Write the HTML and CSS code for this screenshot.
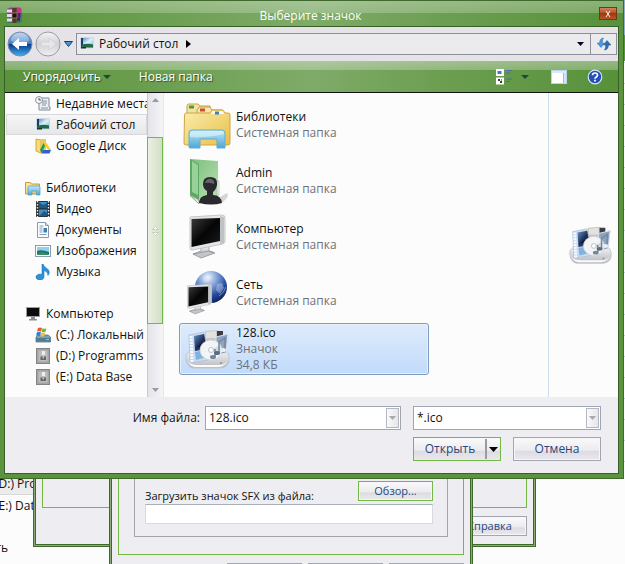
FILE: index.html
```html
<!DOCTYPE html>
<html lang="ru">
<head>
  <meta charset="utf-8">
  <title>Выберите значок</title>
  <link rel="stylesheet" href="styles.css">
</head>
<body>
  <!-- Shared gradients and symbols -->
  <svg class="defs" width="0" height="0" aria-hidden="true">
    <defs>
      <linearGradient id="gFolder" x1="0" y1="0" x2="1" y2="1"><stop offset="0" stop-color="#fbeeb0"/><stop offset="1" stop-color="#e8bf45"/></linearGradient>
      <linearGradient id="gBlue" x1="0" y1="0" x2="0" y2="1"><stop offset="0" stop-color="#c2e8f6"/><stop offset="1" stop-color="#4ba6d8"/></linearGradient>
      <linearGradient id="gGreen" x1="0" y1="0" x2="1" y2="1"><stop offset="0" stop-color="#7dbd7d"/><stop offset="1" stop-color="#b5e2b0"/></linearGradient>
      <linearGradient id="gScreen" x1="0" y1="0" x2="1" y2="1"><stop offset="0" stop-color="#3a3a3a"/><stop offset=".5" stop-color="#050505"/><stop offset="1" stop-color="#1c1c1c"/></linearGradient>
      <linearGradient id="gSilver" x1="0" y1="0" x2="0" y2="1"><stop offset="0" stop-color="#f7f7f8"/><stop offset="1" stop-color="#b5b8bc"/></linearGradient>
      <linearGradient id="gFilm" x1="0" y1="0" x2="1" y2="1"><stop offset="0" stop-color="#6d93cf"/><stop offset=".5" stop-color="#1d2f55"/><stop offset="1" stop-color="#3d68a5"/></linearGradient>
      <radialGradient id="gGlobe" cx=".4" cy=".2" r=".85"><stop offset="0" stop-color="#eef4fc"/><stop offset=".35" stop-color="#7fa0d6"/><stop offset=".7" stop-color="#24489a"/><stop offset="1" stop-color="#0b1c50"/></radialGradient>
      <linearGradient id="gBack" x1="0" y1="0" x2="0" y2="1"><stop offset="0" stop-color="#a9c8ea"/><stop offset=".48" stop-color="#3f7cc4"/><stop offset=".52" stop-color="#0e3c90"/><stop offset="1" stop-color="#3fb0f0"/></linearGradient>
      <linearGradient id="gFwd" x1="0" y1="0" x2="0" y2="1"><stop offset="0" stop-color="#f4f4f5"/><stop offset=".5" stop-color="#d3d3d7"/><stop offset="1" stop-color="#f0f0f2"/></linearGradient>
      <linearGradient id="gSky" x1="0" y1="0" x2="1" y2="1"><stop offset="0" stop-color="#3f7fc8"/><stop offset=".5" stop-color="#dff2f8"/><stop offset="1" stop-color="#6fb0c0"/></linearGradient>
    </defs>
    <symbol id="desktop" viewBox="0 0 16 16">
      <rect x="1" y="1" width="14" height="11.500" rx="1" fill="#cfdae0"/>
      <rect x="2" y="2" width="12" height="9.500" fill="url(#gSky)"/>
      <path d="M2 2h2v9.500H2z" fill="#173d6c"/><path d="M2 9q6-2 12-.5v3H2z" fill="#22684a"/>
      <path d="M2 11h5v1.500H2z" fill="#123a30"/>
    </symbol>
    <symbol id="media" viewBox="0 0 48 44">
      <path d="M3 32Q2 26 8 24L40 23q7 2 6 11-1 6-8 7H10q-6-1-7-9z" fill="url(#gSilver)" stroke="#c3c6ca"/>
      <path d="M5 34q3 4 9 4h22q6 0 8-4-1 5-8 6H12q-6-1-7-6z" fill="#fafafa"/>
      <path d="M22 4l12-1 6 4v10H22z" fill="#c9c8c4"/><path d="M34 4h6v6h-6z" fill="#3a3d41"/><path d="M23 5l10-1v7H23z" fill="#e3e2de"/>
      <path d="M6 8l15-3 4 28-18 3z" fill="#c9dbf0" stroke="#a9bdd8" stroke-width=".7"/>
      <path d="M11 9l10-2 3 15-12 2z" fill="url(#gFilm)"/><path d="M14 20l8-7 2 9z" fill="#0f1a33"/><path d="M12 25l11-2 1 7-11 3z" fill="#7fb2de"/>
      <path d="M8 9l1 26" stroke="#f6faff" stroke-width="3" stroke-dasharray="2 1"/>
      <path d="M33 10l12-3-2 19-10 2z" fill="#8ea3c0" stroke="#d9e4f0"/>
      <ellipse cx="28" cy="23" rx="11" ry="10" fill="#f3f4f5" stroke="#cdd0d5" stroke-width=".7"/>
      <path d="M28 23l9-5q2 4 0 9z" fill="#d3dae2"/><circle cx="28" cy="23" r="2.500" fill="#fff" stroke="#a3aab3" stroke-width=".7"/>
      <path d="M42 23V10M36 26V15l6-4M32 30v-8" fill="none" stroke="#7688a0" stroke-width="1.500"/>
      <ellipse cx="34" cy="26" rx="3" ry="2" fill="#5b6c84"/><ellipse cx="40" cy="23" rx="3" ry="2" fill="#e8edf2"/><ellipse cx="30" cy="30" rx="3" ry="2" fill="#75859a"/>
      <circle cx="38" cy="36" r="1" fill="#8a9098"/>
    </symbol>
    <symbol id="drive" viewBox="0 0 16 16">
      <rect x="1.500" y=".5" width="13" height="15" fill="#a9a9a9" stroke="#858585"/>
      <rect x="3" y="2" width="10" height="12" fill="#bdbdbd" stroke="#999" stroke-width=".7"/>
      <path d="M7 3h3v4H7z" fill="#eee"/><path d="M5.500 8.500h2v2h1.500v-2h2V12H5.500z" fill="#666"/>
    </symbol>
    <symbol id="monitor" viewBox="0 0 48 48">
      <path d="M18 34l8-2v6l4 1-10 4-10-2 8-3z" fill="url(#gSilver)" stroke="#8b8e92" stroke-width=".7"/>
      <path d="M10 41l15-3 7 2-14 5z" fill="#c3c5c8" stroke="#85878b" stroke-width=".7"/>
      <path d="M7 4l32-2q3 0 3 3v23q0 2-2 3L9 37q-2 0-2-2z" fill="#e5e6e8" stroke="#c4c6c9"/>
      <path d="M37 3l4 1v26l-4 1z" fill="#bfc2c5"/>
      <path d="M8.500 6L37 5v23L8.500 34z" fill="url(#gScreen)"/>
    </symbol>
  </svg>

  <!-- Explorer window at the back -->
  <div class="explorer">
    <ul class="explorer-tree">
      <li class="current">(D:) Programms</li>
      <li>(E:) Data Base</li>
      <li class="network">Сеть</li>
    </ul>
    <div class="explorer-edge"></div>
  </div>

  <!-- Archive dialog -->
  <div class="window archive-window">
    <div class="panel"></div>
    <div class="button-row"><button class="btn">Справка</button></div>
  </div>

  <!-- SFX options dialog -->
  <div class="window sfx-window">
    <div class="panel">
      <div class="group">
        <div class="group-row">
          <label for="sfxIcon">Загрузить значок SFX из файла:</label>
          <button class="btn btn-green">Обзор...</button>
        </div>
        <input type="text" id="sfxIcon">
      </div>
    </div>
    <div class="button-row">
      <button class="btn" aria-label="OK"></button>
      <button class="btn" aria-label="Отмена"></button>
      <button class="btn" aria-label="Справка"></button>
    </div>
  </div>

  <!-- Open file dialog -->
  <div class="dialog">
    <header class="titlebar">
      <svg class="app-icon" viewBox="0 0 16 16" width="16" height="16">
        <path d="M1 2l3-1.500h10L15.500 2v4H1z" fill="#8a3f9e"/><path d="M1 6h14.500v4.500H1z" fill="#3a4f9c"/><path d="M1 10.500h14.500v4L14 16H2l-1-1z" fill="#2f7f5a"/>
        <path d="M1 2.500h5v3H1zM1 7h5v3H1zM1 11.500h5v3H1z" fill="#ead9ee"/>
        <path d="M11 2h3v12h-3z" fill="#5b1f5e"/><path d="M11 1h4v5h-4z" fill="#c23a78"/>
        <path d="M6.500 1h4v15h-4z" fill="#5b3526"/><path d="M6 6h5v5H6z" fill="#1b1210" stroke="#b99a64" stroke-width=".7"/>
      </svg>
      <h1>Выберите значок</h1>
      <button class="close" aria-label="Закрыть"><svg viewBox="0 0 8 8" width="8" height="8"><path d="M2 1l4 6M6 1L2 7" stroke="#fff"/></svg></button>
    </header>

    <div class="dialog-body">
      <!-- Address bar -->
      <div class="address-row">
        <button class="nav-btn" aria-label="Назад">
          <svg viewBox="0 0 26 26" width="26" height="26"><circle cx="13" cy="13" r="12" fill="url(#gBack)" stroke="#7d8ba5"/><path d="M4 10a9 8 0 0 1 18 0q-9 4-18 0z" fill="#fff" opacity=".3"/><path d="M5 13l7-6v4h8v4h-8v4z" fill="#fff"/></svg>
        </button>
        <button class="nav-btn" aria-label="Вперёд">
          <svg viewBox="0 0 26 26" width="26" height="26"><circle cx="13" cy="13" r="12" fill="url(#gFwd)" stroke="#9a9aa2"/><path d="M21 13l-7-6v4H6v4h8v4z" fill="#e6e6e9" stroke="#d0d0d4" stroke-width=".7"/></svg>
        </button>
        <button class="history" aria-label="Последние страницы"><svg viewBox="0 0 9 6" width="9" height="6"><path d="M.5.500h8L4.500 5.500z" fill="#4a97d4" stroke="#1c3e66"/></svg></button>
        <div class="address">
          <svg width="16" height="16"><use href="#desktop"/></svg>
          <a href="#">Рабочий стол</a>
          <svg class="crumb-arrow" viewBox="0 0 5 8" width="5" height="8"><path d="M0 0l5 4-5 4z"/></svg>
          <button class="address-drop" aria-label="Предыдущие расположения"><svg viewBox="0 0 7 4" width="7" height="4"><path d="M0 0h7L3.500 4z" fill="#050528"/></svg></button>
        </div>
        <button class="refresh" aria-label="Обновить">
          <svg viewBox="0 0 14 14" width="14" height="14"><path d="M6.500 1Q3 1 2.500 6H0l4 4.500L7.500 6H5.300Q5 3 6.500 1z" fill="#4d9bdc" stroke="#2b6cab" stroke-width=".5"/><path d="M7.500 13q3.500 0 4-5H14l-4-4.500L6.500 8h2.200q.3 3-1.200 5z" fill="#2e6fb8" stroke="#1d4f8c" stroke-width=".5"/></svg>
        </button>
      </div>

      <!-- Toolbar -->
      <div class="toolbar">
        <button class="tool">Упорядочить <svg viewBox="0 0 8 4" width="8" height="4"><path d="M0 0h8L4 4z" fill="#1d4a38"/></svg></button>
        <button class="tool new-folder">Новая папка</button>
        <button class="tool icon-tool view" aria-label="Изменить представление">
          <svg viewBox="0 0 16 16" width="16" height="16"><path d="M0 0h8v7H0zM0 8.500h8v7H0z" fill="#fff"/><path d="M1.500 2h4v3h-4z" fill="#3b7dbd"/><path d="M2 10h2v2H2zM4 12h2v2H4z" fill="#3a3d20"/><path d="M5 10h1v2H5z" fill="#c79"/><path d="M10 1.500h6M10 4h4M10 10h6M10 12.500h4" stroke="#4d6f9c"/></svg>
          <svg viewBox="0 0 8 4" width="8" height="4"><path d="M0 0h8L4 4z" fill="#1d4a38"/></svg>
        </button>
        <button class="tool icon-tool pane" aria-label="Область просмотра">
          <svg viewBox="0 0 16 14" width="16" height="14"><rect x=".5" y=".5" width="15" height="13" fill="#fff" stroke="#b9d4ec"/><path d="M1 1h14v2H1z" fill="#dbe9f6"/><path d="M12.500 3v10" stroke="#9dbbe0"/><path d="M13 3h2v10h-2z" fill="#d4e4f6"/></svg>
        </button>
        <button class="tool icon-tool" aria-label="Справка">
          <svg viewBox="0 0 16 16" width="16" height="16"><circle cx="8" cy="8" r="6.800" fill="#2450b8" stroke="#d8e2f6" stroke-width="1.200"/><path d="M5.500 6.300Q5.600 4 8 4t2.500 2.200C10.500 8 8 8 8 9.700" fill="none" stroke="#fff" stroke-width="1.700"/><path d="M7.100 10.800h1.800v1.700H7.100z" fill="#fff"/></svg>
        </button>
      </div>

      <div class="content">
        <!-- Navigation tree -->
        <nav class="tree">
          <a class="child" href="#"><svg viewBox="0 0 16 16" width="16" height="16"><path d="M5 2h9v9h1v3H4V3z" fill="#eceff2" stroke="#7f8a95"/><path d="M7 5h5M7 7h5M7 9h4M6 12h7" stroke="#7f93a8"/><circle cx="4" cy="4" r="3.500" fill="#f5f6f8" stroke="#8b949e"/><path d="M4 2v2h2" fill="none" stroke="#555"/></svg>Недавние места</a>
          <a class="child selected" href="#"><svg width="16" height="16"><use href="#desktop"/></svg>Рабочий стол</a>
          <a class="child" href="#"><svg viewBox="0 0 16 16" width="16" height="16"><path d="M1 1l5 1v13l-5-2z" fill="#f4dc7a" stroke="#d1a93c"/><path d="M5 1h6v13H6z" fill="#ecc85a"/><path d="M8.500 5h3L16 12h-3z" fill="#f7cf1e"/><path d="M8.500 5L10 8l-3.500 7L5 12z" fill="#1f9d55"/><path d="M8 12h8l-1.500 3.500H6.300z" fill="#2d62d0"/></svg>Google Диск</a>

          <a class="root" href="#"><svg viewBox="0 0 16 16" width="16" height="16"><path d="M.5 2.500h5l1 1.500h8v10H.5z" fill="url(#gFolder)" stroke="#c59c3f"/><path d="M3 7.500q0-1.500 1.500-1.500h9q1.500 0 1.500 1.500V15h-3.500v-4H7v4H3z" fill="url(#gBlue)" stroke="#4b9cc6" stroke-width=".7"/></svg>Библиотеки</a>
          <a class="child" href="#"><svg viewBox="0 0 16 16" width="16" height="16"><path d="M1 0h14v16H1z" fill="#2d3337"/><path d="M4 1h8v6H4zM4 8.500h8V15H4z" fill="#3e8fcb"/><path d="M4 1l4 3 4-2v5H4zM4 15l5-5 3 2v3z" fill="#205982"/><path d="M2.500 0v16M13.500 0v16" stroke="#e6ecef" stroke-width="1.400" stroke-dasharray="1.500 1.500"/></svg>Видео</a>
          <a class="child" href="#"><svg viewBox="0 0 16 16" width="16" height="16"><path d="M2.500.5h8l3 3v12h-11z" fill="#fafcfd" stroke="#8a9aa7"/><path d="M10.500.5v3h3" fill="#d4dfe8" stroke="#8a9aa7"/><path d="M4.500 4h4M4.500 6h3M4.500 8h3M4.500 10h3M4.500 12.500h7" stroke="#7fa0bd"/><path d="M8.500 6h3.500v4.500H8.500z" fill="#3c7fae"/></svg>Документы</a>
          <a class="child" href="#"><svg viewBox="0 0 16 16" width="16" height="16"><rect x=".5" y="2.500" width="15" height="11" fill="#fff" stroke="#8b9daa"/><path d="M2 4h12v8H2z" fill="#8fd0f0"/><path d="M2 8q4-2 12 1v3H2z" fill="#1c6d8f"/><path d="M2 10l5-1 7 2v1H2z" fill="#358e59"/></svg>Изображения</a>
          <a class="child" href="#"><svg viewBox="0 0 16 16" width="16" height="16"><path d="M8 0q1 3 4 4.500 4 3 1 7 0-4-4-5V13a4 3 0 1 1-2-2.500V0z" fill="#2a93dc" stroke="#1769ab" stroke-width=".5"/></svg>Музыка</a>

          <a class="root" href="#"><svg viewBox="0 0 16 16" width="16" height="16"><path d="M1 1h14v10H1z" fill="#9a9ca0"/><path d="M2 2h12v8H2z" fill="#0b0b0b"/><path d="M6 11h4v2h2v1.500H4V13h2z" fill="#8a8c90"/></svg>Компьютер</a>
          <a class="child" href="#"><svg viewBox="0 0 16 16" width="16" height="16"><path d="M1 10l2-2h10l2.500 2v5H1z" fill="#7e9fb0" stroke="#4b6572" stroke-width=".7"/><path d="M1 11h14v3.500H1z" fill="#4f7d94"/><path d="M11 12h3v1h-3z" fill="#6ee84f"/><path d="M3 1q2-1 4 0L6 4.500q-2-1-4 0z" fill="#e8592b"/><path d="M7.500 1.200q2 1 4 0l-1 3.600q-2 1-4 0z" fill="#74b62e"/><path d="M2 5.200q2-1 4 0L5 8.800q-2-1-4 0z" fill="#2f7fd4"/><path d="M6.300 5.500q2 1 4 0l-1 3.500q-2 1-4 0z" fill="#f6c22c"/></svg>(C:) Локальный диск</a>
          <a class="child" href="#"><svg width="16" height="16"><use href="#drive"/></svg>(D:) Programms</a>
          <a class="child" href="#"><svg width="16" height="16"><use href="#drive"/></svg>(E:) Data Base</a>
        </nav>

        <div class="scrollbar">
          <svg viewBox="0 0 7 4" width="7" height="4"><path d="M0 4h7L3.500 0z" fill="#9b9ba1"/></svg>
          <div class="scroll-track">
            <div class="scroll-thumb">
              <svg viewBox="0 0 7 10" width="7" height="10"><path d="M.5 3.500l3-3 3 3zM.5 6.500l3 3 3-3z" fill="#fff" stroke="#b9c6ae" stroke-width=".8"/></svg>
            </div>
          </div>
          <svg viewBox="0 0 7 4" width="7" height="4"><path d="M0 0h7L3.500 4z" fill="#9b9ba1"/></svg>
        </div>

        <!-- File list -->
        <ul class="files">
          <li>
            <svg viewBox="0 0 48 48" width="48" height="48"><path d="M4 5q0-2 2-2h9l2 2h10v8H4z" fill="#f3e3a0" stroke="#c9a14a"/><path d="M6 4.500h5v3H6z" fill="#4a9a48"/><path d="M14 9l2-3h11l2 3h10v8H14z" fill="#f6e7ac" stroke="#c9a14a"/><path d="M17 7.500h5v3h-5z" fill="#c9502e"/><path d="M1.500 14q0-2 2-2H27l2-3h11l2 3h3q2 0 2 2v28q0 2-2 2H3q-2 0-2-2z" fill="url(#gFolder)" stroke="#cfa544"/><path d="M29 10h11l1 3H28z" fill="#f7fafc"/><path d="M32 10.500h4v3h-4z" fill="#3d7fc0"/><path d="M6 32q0-3 3-3h30q3 0 3 3v15h-8v-8q0-1-1-1H18q-1 0-1 1v8H7q-1 0-1-1z" fill="url(#gBlue)" stroke="#5eaed4"/><path d="M7 32q1-2 3-2h29q2 0 2 3-18 4-34 3z" fill="#e0f5fb" opacity=".6"/></svg>
            <p>Библиотеки<span>Системная папка</span></p>
          </li>
          <li>
            <svg viewBox="0 0 48 48" width="48" height="48"><path d="M30 44l14-8q3 3-4 9z" fill="#d5d5d5"/><path d="M7 2l28 2v35l-19 3L7 38z" fill="url(#gGreen)"/><path d="M34 24h2v14h-2z" fill="#eef5ee" stroke="#9cb69c" stroke-width=".6"/><path d="M7 2l9 5v40L7 39z" fill="#5fa765"/><path d="M9 4l6 4v30L9 35z" fill="#98d29a"/><path d="M7 38l9 5v4z" fill="#dfe8df" stroke="#8fa08f" stroke-width=".7"/><path d="M20 27q0-7 7-7 8 0 7 8-1 5-4 7v3q8 0 9 8-10 3-23 0 0-7 8-8v-4q-4-2-4-7z" fill="#2b2930"/><path d="M22 26q2-5 6-4 4 1 3 5-5-2-9-1z" fill="#66636b"/></svg>
            <p>Admin<span>Системная папка</span></p>
          </li>
          <li>
            <svg width="48" height="48"><use href="#monitor"/></svg>
            <p>Компьютер<span>Системная папка</span></p>
          </li>
          <li>
            <svg viewBox="0 0 48 48" width="48" height="48"><circle cx="28" cy="18" r="16" fill="url(#gGlobe)"/><path d="M20 8q6-4 9 0l-4 5q-6 1-5-5zM34 15l5-1 2 5-4 6-4-4z" fill="#e4ecf8" opacity=".35"/><path d="M36 27q5-3 7-9" fill="none" stroke="#a8c2ee" opacity=".6"/><svg x="0" y="14" width="33" height="33" viewBox="3 0 43 48"><use href="#monitor" width="48" height="48"/></svg></svg>
            <p>Сеть<span>Системная папка</span></p>
          </li>
          <li class="selected">
            <svg width="48" height="44"><use href="#media"/></svg>
            <p>128.ico<span>Значок</span><span>34,8 КБ</span></p>
          </li>
        </ul>

        <div class="preview">
          <svg width="46" height="44"><use href="#media"/></svg>
        </div>
      </div>

      <!-- File name, type and buttons -->
      <footer class="footer">
        <label for="fileName">Имя файла:</label>
        <div class="combo">
          <input type="text" id="fileName" value="128.ico">
          <button class="combo-arrow" aria-label="Показать список"><svg viewBox="0 0 7 4" width="7" height="4"><path d="M0 0h7L3.500 4z" fill="#a9a9ae"/></svg></button>
        </div>
        <div class="actions">
          <div class="combo">
            <select aria-label="Тип файлов"><option>*.ico</option></select>
            <span class="combo-arrow"><svg viewBox="0 0 7 4" width="7" height="4"><path d="M0 0h7L3.500 4z" fill="#a9a9ae"/></svg></span>
          </div>
          <div class="action-buttons">
            <div class="split btn-green">
              <button class="open">Открыть</button>
              <button class="open-more" aria-label="Другие варианты"><svg viewBox="0 0 9 5" width="9" height="5"><path d="M0 0h9L4.500 5z"/></svg></button>
            </div>
            <button class="btn">Отмена</button>
          </div>
        </div>
      </footer>
    </div>
  </div>
</body>
</html>
```
FILE: styles.css
```css
* { box-sizing: border-box; }
body {
  position: relative;
  margin: 0;
  min-height: 100vh;
  overflow: hidden;
  background: #fcfcfc;
  color: #111;
  font: 12px/16px "Open Sans", sans-serif;
}
ul { list-style: none; margin: 0; padding: 0; }
button, input, select { font: inherit; color: inherit; margin: 0; padding: 0; border: 0; background: none; border-radius: 0; }
button, select { cursor: pointer; }
a { color: inherit; text-decoration: none; }
svg { display: block; flex: none; }
.defs { position: absolute; }

/* Explorer window */
.explorer { position: absolute; inset: 0; overflow: hidden; }
.explorer-tree { width: 40px; padding-top: 473px; line-height: 21px; white-space: nowrap; }
.explorer-tree li { text-indent: -5px; }
.explorer-tree .current { background: #ececec; border-bottom: 1px solid #d8d8d8; }
.explorer-tree .network { margin-top: 21px; text-indent: -19px; }
.explorer-edge {
  position: absolute;
  top: 0;
  right: 0;
  width: 1px;
  height: 479px;
  background: linear-gradient(#8fb0d0 35px, #5b933f 35px, #5b933f 61px, transparent 61px), repeating-linear-gradient(#fcfcfc 0 20px, #b8d0e0 20px 21px);
}

/* Windows behind the dialog */
.window {
  position: absolute;
  top: 442px;
  padding: 8px;
  background: #eeeef2;
  border: 1px solid #3f6a2b;
  box-shadow: inset 0 0 0 1px #8aab79, inset 0 0 0 2px #3f6a2b;
  font-size: 11px;
  line-height: 14px;
}
.archive-window { left: 33px; width: 503px; padding-bottom: 10px; }
.archive-window .panel { height: 57px; }
.sfx-window { left: 109px; width: 364px; }
.panel { border: 1px solid #74b944; }
.sfx-window .panel { padding: 16px 15px 17px; }
.group { padding: 12px 14px 12px 10px; border: 1px solid #a3a3ab; }
.group-row { display: flex; justify-content: space-between; margin-bottom: 3px; }
.group-row label { padding-top: 8px; height: 20px; }
.group input { display: block; width: 100%; height: 20px; background: #fff; border: 1px solid #d9d9df; border-top-color: #a9b0b8; }
.button-row { display: flex; gap: 6px; justify-content: flex-end; margin-top: 8px; }

.btn {
  width: 75px;
  height: 20px;
  border: 1px solid #a3a6b0;
  background: linear-gradient(#fafafb, #ececf0 55%, #dcdce2 60%, #e8e8ed);
  box-shadow: inset 0 0 0 1px #f6f6f8;
  color: #27467d;
}
.btn-green { border: 1px solid #74b944; }

/* Open dialog frame */
.dialog {
  position: relative;
  width: calc(100% - 1px);
  padding: 0 4px 4px;
  border: 1px solid #40692e;
  border-left: 0;
  background: #5b933f;
}
.titlebar {
  display: flex;
  align-items: center;
  height: 25px;
  margin: 0 -4px;
  padding: 0 6px;
  background:
    linear-gradient(rgba(255,255,255,.3), rgba(255,255,255,.22) 50%, transparent 50%),
    linear-gradient(90deg, #5a933c, #6c9f51 25%, #7fab68 50%, #6d9f53 70%, #57913a);
}
.titlebar h1 { flex: 1; margin: 5px 0 0; text-align: center; font-size: 12px; font-weight: normal; color: #fff; }
.app-icon { margin-top: 3px; }
.close {
  display: flex;
  align-items: center;
  justify-content: center;
  width: 18px;
  height: 13px;
  border: 1px solid #6f3a1c;
  background: linear-gradient(#cf8560, #b04a20 50%, #9c3a10 50%, #bb5524);
}
.dialog-body { border: 1px solid #3a602a; background: #eeeef2; }

/* Address bar */
.address-row { display: flex; align-items: center; height: 34px; padding: 0 1px 0 2px; background: #e5e2e8; }
.nav-btn { margin-right: 2px; }
.history { padding: 0 3px 0 1px; }
.address {
  display: flex;
  flex: 1;
  align-items: center;
  height: 22px;
  padding: 0 6px 0 2px;
  border: 1px solid #8d8f9b;
  background: #ebebed;
}
.address a { margin: 0 8px 0 4px; }
.address-drop { margin-left: auto; }
.refresh { display: flex; align-items: center; justify-content: center; width: 26px; height: 22px; border: 1px solid #8d8f9b; border-left: 0; background: #ebebed; }

/* Toolbar */
.toolbar {
  display: flex;
  align-items: center;
  height: 32px;
  padding: 0 15px 0 18px;
  border-bottom: 1px solid #111;
  background:
    linear-gradient(rgba(255,255,255,.36), rgba(255,255,255,.26) 9px, transparent 9px),
    linear-gradient(90deg, #5a933c, #6c9f51 25%, #7fab68 50%, #6d9f53 70%, #57913a);
}
.tool { display: flex; align-items: center; gap: 2px; color: #fff; text-shadow: 1px 1px 1px #2f5220; }
.new-folder { margin-left: 28px; }
.view { gap: 9px; margin-left: auto; }
.pane { margin: 0 20px 0 22px; }

/* Tree, files, preview */
.content { display: flex; height: 304px; background: #fcfcfc; }
.tree { width: 142px; overflow: hidden; white-space: nowrap; padding-left: 1px; }
.tree a { display: flex; align-items: center; gap: 5px; height: 21px; padding-left: 29px; }
.tree .root { margin-top: 21px; padding-left: 19px; }
.tree .selected { background: linear-gradient(#f7f7f8, #e6e6e8); box-shadow: inset 0 0 0 1px #d9d9dc; }
.scrollbar {
  display: flex;
  flex-direction: column;
  align-items: center;
  width: 16px;
  padding: 5px 0;
  border-left: 1px solid #c9c9d2;
  background: linear-gradient(90deg, #e3e3e9, #f5f5f8);
}
.scroll-track { flex: 1; width: 100%; padding-top: 35px; }
.scroll-thumb {
  display: flex;
  align-items: center;
  justify-content: center;
  height: 187px;
  margin-left: -1px;
  border: 1px solid #74b944;
  background: linear-gradient(90deg, #e9f0e2, #d2dfc6);
}
.files { flex: 1; display: flex; flex-direction: column; gap: 4px; padding: 6px 0 0 15px; border-left: 1px solid #dfe8f4; }
.files li { display: flex; align-items: center; gap: 5px; width: 250px; height: 52px; padding-left: 4px; }
.files p { margin: 0; }
.files span { display: block; color: #6d737a; }
.files .selected { border: 1px solid #7d9cc4; border-radius: 3px; padding-left: 3px; background: linear-gradient(#dfebfc, #c1dbfb); box-shadow: inset 0 0 0 1px #e8f2fd; }
.preview { display: flex; align-items: center; width: 70px; padding-left: 18px; border-left: 1px solid #cfdced; }

/* Footer */
.footer {
  display: flex;
  align-items: flex-start;
  justify-content: flex-end;
  height: 76px;
  padding: 9px 17px 0 0;
}
.footer label { margin: 4px 5px 0 0; }
.combo { display: flex; width: 196px; height: 24px; padding: 1px; border: 1px solid #9fa6b0; background: #fff; }
.combo input, .combo select { flex: 1; min-width: 0; padding-left: 2px; appearance: none; outline: 0; }
.combo-arrow { display: flex; align-items: center; justify-content: center; width: 13px; border: 1px solid #b3b8c2; background: linear-gradient(90deg, #fafafb, #e6e6ea); }
.actions { width: 188px; margin-left: 12px; }
.actions .combo { width: 100%; }
.action-buttons { display: flex; gap: 12px; margin-top: 7px; }
.action-buttons .btn, .split { width: 88px; height: 24px; }
.split { display: flex; padding: 1px; background: linear-gradient(#fafafb, #ececf0 55%, #dcdce2 60%, #e8e8ed); }
.open { flex: 1; color: #27467d; }
.open-more { display: flex; align-items: center; justify-content: center; width: 14px; border-left: 2px solid #9a9aa2; }
```
